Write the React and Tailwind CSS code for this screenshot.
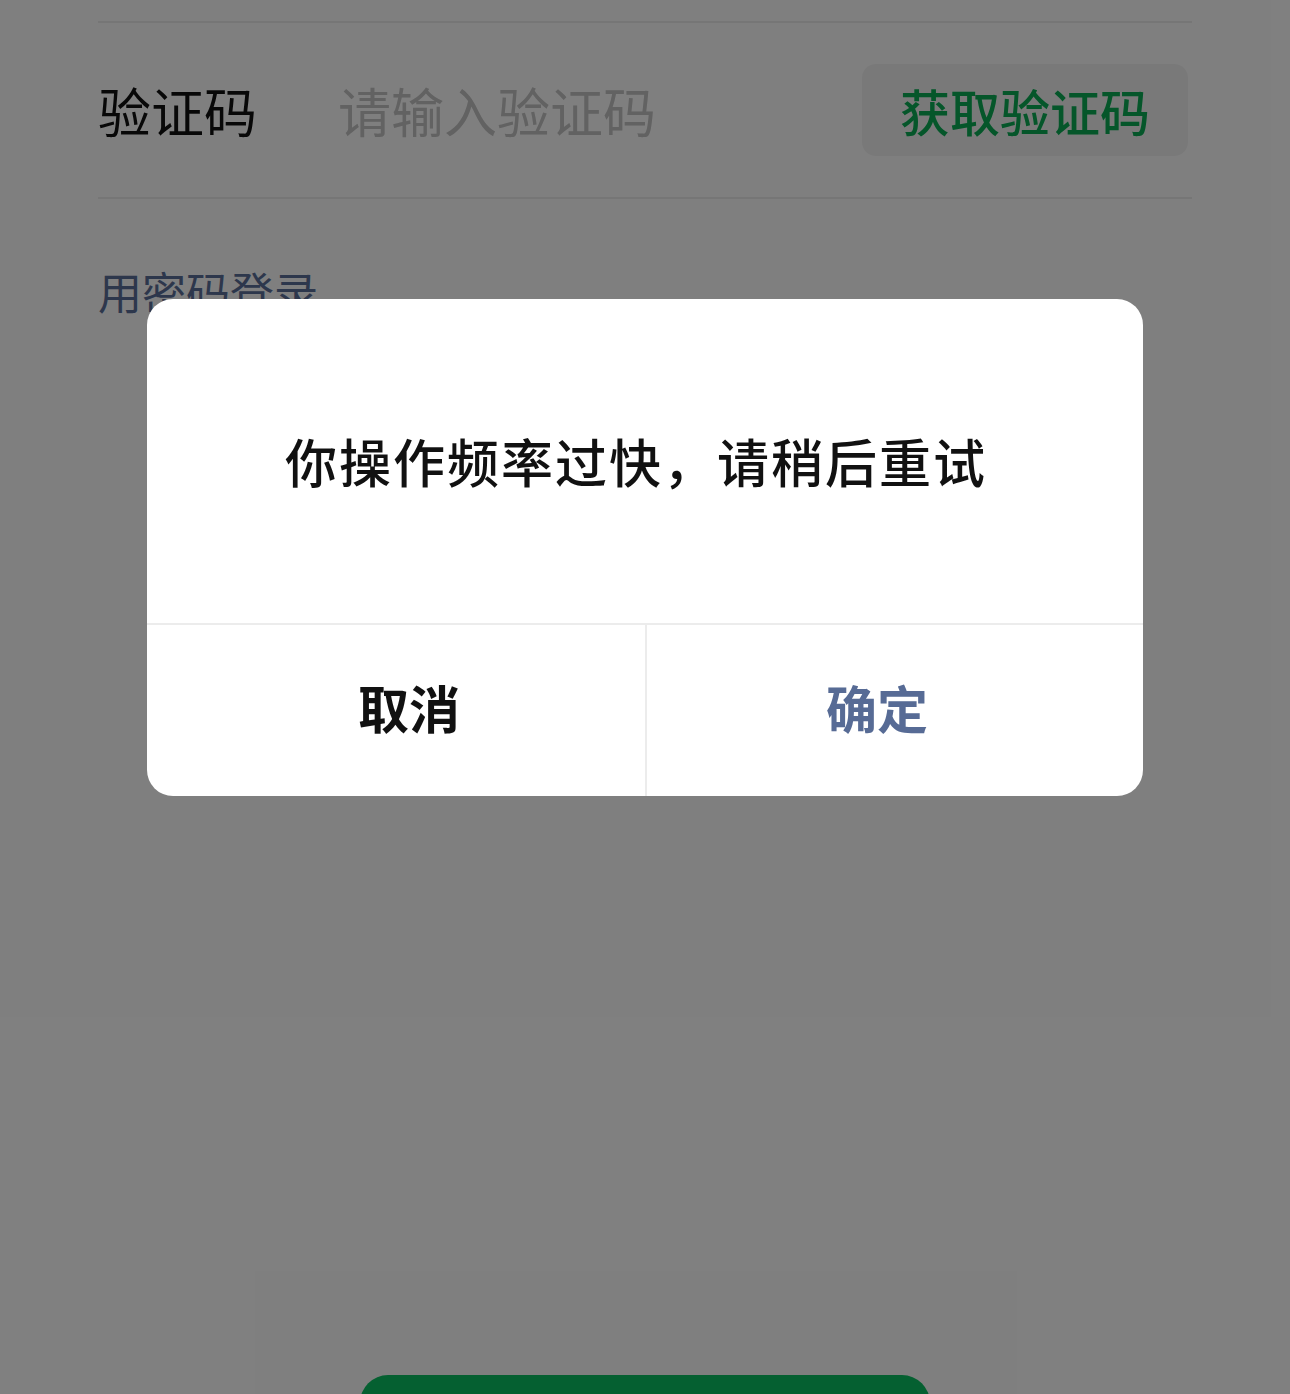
import React from 'react';

const cjk = { fontFamily: '"Noto Sans CJK SC", "Noto Sans", sans-serif' };

export default function App() {
  return (
    <div className="relative w-[1290px] h-[1394px] overflow-hidden bg-white" style={cjk}>
      {/* login page underneath */}
      <div className="px-[98px] pt-[21px]">
        <div className="border-t-2 border-[#ececec]" />
        <div className="flex items-center h-[174px]">
          <span className="w-[240px] text-[53px] text-[#111] leading-none">验证码</span>
          <span className="text-[53px] text-[#c4c4c4] leading-none">请输入验证码</span>
          <div className="ml-auto mr-[4px] flex items-center justify-center w-[326px] h-[92px] rounded-[14px] bg-[#f3f3f3]">
            <span className="text-[50px] font-medium text-[#0aad55] leading-none">获取验证码</span>
          </div>
        </div>
        <div className="border-t-2 border-[#ececec]" />
        <div className="pt-[70px] text-[44px] text-[#5a6e98] leading-none">用密码登录</div>
      </div>
      <div className="absolute left-[360px] top-[1375px] w-[570px] h-[90px] rounded-[28px] bg-[#0bc062]" />

      {/* dim overlay */}
      <div className="absolute inset-0 bg-black/50" />

      {/* dialog */}
      <div className="absolute left-[147px] top-[299px] w-[996px] rounded-[26px] bg-white overflow-hidden">
        <div className="flex items-center justify-center h-[324px] pr-[18px]">
          <span className="text-[52px] font-medium text-[#111] leading-none tracking-[2px]">你操作频率过快，请稍后重试</span>
        </div>
        <div className="grid grid-cols-2 h-[173px] border-t-2 border-[#ececec]">
          <div className="flex items-center justify-center pl-[26px] pb-[6px]">
            <span className="text-[51px] font-bold text-[#111] leading-none">取消</span>
          </div>
          <div className="flex items-center justify-center border-l-2 border-[#ececec] pr-[36px] pb-[6px]">
            <span className="text-[51px] font-bold text-[#576b95] leading-none">确定</span>
          </div>
        </div>
      </div>
    </div>
  );
}
